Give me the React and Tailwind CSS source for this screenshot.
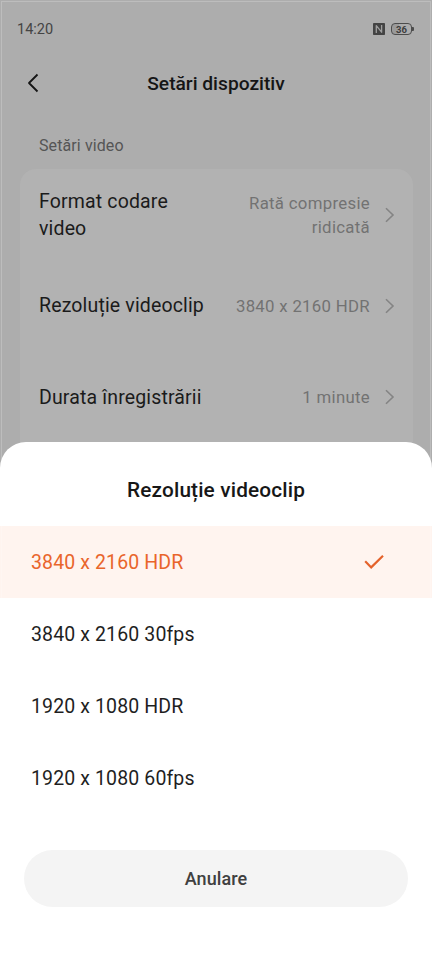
const settings = [
  {
    label: "Format codare video",
    value: "Rată compresie ridicată",
    labelClass: "w-[150px]",
    valueClass: "w-[140px]",
  },
  { label: "Rezoluție videoclip", value: "3840 x 2160 HDR" },
  { label: "Durata înregistrării", value: "1 minute" },
]

const options = [
  "3840 x 2160 HDR",
  "3840 x 2160 30fps",
  "1920 x 1080 HDR",
  "1920 x 1080 60fps",
]

function StatusBar() {
  return (
    <div className="flex h-[58px] items-center justify-between pl-[17px] pr-[18px] text-[#444444]">
      <span className="pt-[2px] text-[14.5px]">14:20</span>

      <div className="flex items-center gap-[6px]">
        <svg width="12" height="12" viewBox="0 0 12 12">
          <rect width="12" height="12" rx="0.8" fill="#444444" />
          <path
            d="M3.3 10V2.6L8.6 9.2V2"
            fill="none"
            stroke="#a0a0a0"
            strokeWidth="1.3"
            strokeLinejoin="round"
          />
        </svg>

        <div className="flex items-center">
          <div className="flex h-[12px] w-[21px] items-center justify-center rounded-[4px] border border-[#4c4c4c] bg-linear-to-r from-[#9a9a9a] from-35% to-[#adadad] to-35% pt-px text-[9.5px] leading-none font-bold text-[#3c3c3c]">
            36
          </div>
          <div className="h-[4px] w-[2px] rounded-r-[1px] bg-[#4c4c4c]" />
        </div>
      </div>
    </div>
  )
}

function ChevronRight() {
  return (
    <svg
      className="ml-[15px] shrink-0"
      width="10"
      height="16"
      viewBox="0 0 10 16"
      fill="none"
      stroke="#848484"
      strokeWidth="1.6"
    >
      <path d="M1 1.2L8 8L1 14.8" />
    </svg>
  )
}

function SettingRow({ label, value, labelClass = "", valueClass = "" }) {
  return (
    <div className="flex h-[91.25px] items-center pl-[19px] pr-[18px]">
      <span className={`text-[19.5px] leading-[27px] tracking-[0.15px] text-[#1b1b1b] ${labelClass}`}>
        {label}
      </span>
      <span className={`ml-auto text-right text-[16.8px] leading-[24px] tracking-[0.3px] text-[#727272] ${valueClass}`}>
        {value}
      </span>
      <ChevronRight />
    </div>
  )
}

function OptionRow({ text, selected }) {
  return (
    <button
      className={`flex h-[72px] w-full items-center justify-between pl-[31px] pr-[48px] text-[19.5px] tracking-[0.12px] ${
        selected ? "bg-[#fff4ef] text-[#e9652b]" : "text-[#1f1f1f]"
      }`}
    >
      <span className="pt-px">{text}</span>
      {selected && (
        <svg
          width="20"
          height="16"
          viewBox="0 0 20 16"
          fill="none"
          stroke="#e4622b"
          strokeWidth="2.2"
        >
          <path d="M1.2 7.3L7.2 13.4L19 1.8" />
        </svg>
      )}
    </button>
  )
}

export default function App() {
  return (
    <div className="flex h-[960px] w-[432px] flex-col overflow-hidden bg-[#adadad] font-[Roboto,sans-serif] outline-1 -outline-offset-2 outline-white/20">
      <div className="h-[442px] shrink-0">
        <StatusBar />

        <header className="grid h-[50px] grid-cols-[60px_1fr_60px] items-center">
          <svg
            className="ml-[27px]"
            width="12"
            height="20"
            viewBox="0 0 12 20"
            fill="none"
            stroke="#151515"
            strokeWidth="1.8"
            strokeLinejoin="round"
          >
            <path d="M10.5 1.5L2 10L10.5 18.5" />
          </svg>
          <h1 className="pt-[2px] text-center text-[19.2px] font-medium text-[#151515]">
            Setări dispozitiv
          </h1>
        </header>

        <h2 className="flex h-[61px] items-center px-[39px] pt-[14px] text-[16px] tracking-[0.1px] text-[#555555]">
          Setări video
        </h2>

        <section className="mr-[19px] ml-[20px] h-[273px] rounded-t-[16px] bg-[#b2b2b2]">
          {settings.map((item) => (
            <SettingRow key={item.label} {...item} />
          ))}
        </section>
      </div>

      {/* the page colour shows behind the sheet's rounded corners */}
      <div className="flex grow flex-col rounded-t-[26px] bg-white">
        <h2 className="flex h-[84px] shrink-0 items-center justify-center pt-[14px] text-[20.8px] font-medium tracking-[0.15px] text-[#171717]">
          Rezoluție videoclip
        </h2>

        {options.map((text, i) => (
          <OptionRow key={text} text={text} selected={i === 0} />
        ))}

        <button className="mx-[24px] mt-[36px] h-[57px] rounded-full bg-[#f4f4f4] text-[18px] font-medium tracking-[0.1px] text-[#404040]">
          Anulare
        </button>
      </div>
    </div>
  )
}
